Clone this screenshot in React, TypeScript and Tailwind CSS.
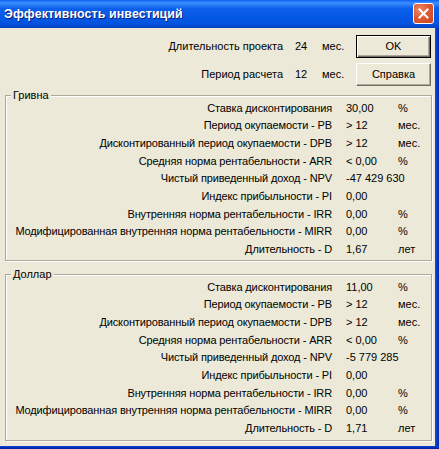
import React from 'react';

interface Row {
  label: string;
  value: string;
  unit?: string;
}

const uah: Row[] = [
  { label: 'Ставка дисконтирования', value: '30,00', unit: '%' },
  { label: 'Период окупаемости - PB', value: '> 12', unit: 'мес.' },
  { label: 'Дисконтированный период окупаемости - DPB', value: '> 12', unit: 'мес.' },
  { label: 'Средняя норма рентабельности - ARR', value: '< 0,00', unit: '%' },
  { label: 'Чистый приведенный доход - NPV', value: '-47 429 630' },
  { label: 'Индекс прибыльности - PI', value: '0,00' },
  { label: 'Внутренняя норма рентабельности - IRR', value: '0,00', unit: '%' },
  { label: 'Модифицированная внутренняя норма рентабельности - MIRR', value: '0,00', unit: '%' },
  { label: 'Длительность - D', value: '1,67', unit: 'лет' },
];

const usd: Row[] = [
  { label: 'Ставка дисконтирования', value: '11,00', unit: '%' },
  { label: 'Период окупаемости - PB', value: '> 12', unit: 'мес.' },
  { label: 'Дисконтированный период окупаемости - DPB', value: '> 12', unit: 'мес.' },
  { label: 'Средняя норма рентабельности - ARR', value: '< 0,00', unit: '%' },
  { label: 'Чистый приведенный доход - NPV', value: '-5 779 285' },
  { label: 'Индекс прибыльности - PI', value: '0,00' },
  { label: 'Внутренняя норма рентабельности - IRR', value: '0,00', unit: '%' },
  { label: 'Модифицированная внутренняя норма рентабельности - MIRR', value: '0,00', unit: '%' },
  { label: 'Длительность - D', value: '1,71', unit: 'лет' },
];

function Group({ title, rows, className }: { title: string; rows: Row[]; className?: string }) {
  return (
    <div
      className={`relative border border-[#aca899] shadow-[inset_1px_1px_0_#fff,1px_1px_0_#fff] pt-[3px] ${className ?? ''}`}
    >
      <span className="absolute -top-[8px] left-[5px] bg-[#ece9d8] px-[2px] leading-[14px]">{title}</span>
      {rows.map((r) => (
        <div key={r.label} className="grid grid-cols-[340px_52px_1fr] h-[17.7px] items-center whitespace-nowrap">
          <span className="text-right pr-[14px] tracking-[-0.13px]">{r.label}</span>
          <span>{r.value}</span>
          <span>{r.unit ?? ''}</span>
        </div>
      ))}
    </div>
  );
}

export default function App() {
  return (
    <div className="w-[439px] h-[449px] flex flex-col overflow-hidden text-[11px] text-black font-['Liberation_Sans',Arial,sans-serif]">
      <div className="h-[28px] flex items-center justify-between pl-[4px] pr-[5px] bg-[linear-gradient(to_bottom,#0a5ff2_0%,#3b8fff_10%,#0d60ea_30%,#0558e6_60%,#0453df_85%,#0340c0_100%)]">
        <span className="text-white font-bold text-[12.4px] tracking-[0.1px] [text-shadow:1px_1px_0_#0a1e78]">
          Эффективность инвестиций
        </span>
        <button className="w-[21px] h-[21px] mt-[-1px] rounded-[3px] border border-white bg-[radial-gradient(circle_at_30%_30%,#ec8a6a_0%,#df5a34_45%,#c8401e_100%)] flex items-center justify-center">
          <svg width="11" height="11" viewBox="0 0 11 11">
            <path d="M1.5 1.5 L9.5 9.5 M9.5 1.5 L1.5 9.5" stroke="#fff" strokeWidth="2" strokeLinecap="square" />
          </svg>
        </button>
      </div>
      <div className="flex flex-1">
        <div className="flex-1 bg-[#ece9d8] flex flex-col pl-[5px] pr-[3px]">
          <div className="flex justify-end pt-[7px] pr-[1px]">
            <div className="grid grid-cols-[auto_27px_34px] auto-rows-[23px] gap-y-[5px] items-center whitespace-nowrap">
              <span className="text-right pr-[12px]">Длительность проекта</span>
              <span>24</span>
              <span>мес.</span>
              <span className="text-right pr-[12px]">Период расчета</span>
              <span>12</span>
              <span>мес.</span>
            </div>
            <div className="flex flex-col gap-[5px]">
              <button className="w-[75px] h-[23px] border border-black bg-[#ece9d8] shadow-[inset_1px_1px_0_#fff,inset_-1px_-1px_0_#716f64,inset_-2px_-2px_0_#aca899]">
                OK
              </button>
              <button className="w-[75px] h-[23px] border border-t-white border-l-white border-r-[#716f64] border-b-[#716f64] bg-[#ece9d8] shadow-[inset_-1px_-1px_0_#aca899]">
                Справка
              </button>
            </div>
          </div>
          <Group title="Гривна" rows={uah} className="mt-[9px] h-[166px]" />
          <Group title="Доллар" rows={usd} className="mt-[13px] h-[167px]" />
        </div>
        <div className="w-[4px] bg-[linear-gradient(to_right,#0a4ee0,#0837c8,#002aa8)]" />
      </div>
      <div className="h-[3px] bg-[linear-gradient(to_bottom,#0a44d4,#0030b8,#001e98)]" />
    </div>
  );
}
